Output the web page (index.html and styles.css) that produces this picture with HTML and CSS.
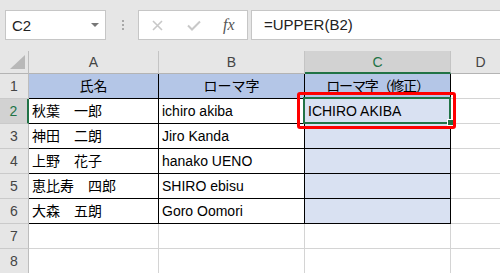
FILE: index.html
```html
<html>
<head>
	<title>UPPER</title>
	<meta http-equiv="content-type" content="text/html;charset=utf-8">
	<link rel="stylesheet" href="styles.css">
</head>
<body>
	<!-- 数式バー -->
	<div class="toolbar">
		<div class="namebox"><span class="ref">C2</span><span class="drop"></span></div>
		<div class="grip"><i></i><i></i><i></i></div>
		<div class="fxbox">
			<svg class="cancel" width="11" height="11" viewBox="0 0 11 11"><path d="M1 1L10 10M10 1L1 10" stroke="#c8c8c8" stroke-width="1.6" fill="none"/></svg>
			<svg class="enter" width="14" height="11" viewBox="0 0 14 11"><path d="M1 5.5L5 9.5L13 1.5" stroke="#c8c8c8" stroke-width="2" fill="none"/></svg>
			<span class="fx">fx</span>
		</div>
		<div class="formula">=UPPER(B2)</div>
	</div>
	<!-- シート -->
	<div class="sheet">
		<div class="corner"><span class="tri"></span></div>
		<div class="hd">A</div>
		<div class="hd">B</div>
		<div class="hd on col">C</div>
		<div class="hd">D</div>

		<div class="rh">1</div>
		<div class="c t ttl ctr">氏名</div>
		<div class="c t ttl ctr">ローマ字</div>
		<div class="c t ttl ctr narrow">ローマ字（修正）</div>
		<div class="c"></div>

		<div class="rh on row">2</div>
		<div class="c t">秋葉　一郎</div>
		<div class="c t">ichiro akiba</div>
		<div class="c t fill cur">ICHIRO AKIBA
			<span class="cursor"></span><span class="handle"></span><span class="mark"></span>
		</div>
		<div class="c"></div>

		<div class="rh">3</div>
		<div class="c t">神田　二朗</div>
		<div class="c t">Jiro Kanda</div>
		<div class="c t fill"></div>
		<div class="c"></div>

		<div class="rh">4</div>
		<div class="c t">上野　花子</div>
		<div class="c t">hanako UENO</div>
		<div class="c t fill"></div>
		<div class="c"></div>

		<div class="rh">5</div>
		<div class="c t">恵比寿　四郎</div>
		<div class="c t">SHIRO ebisu</div>
		<div class="c t fill"></div>
		<div class="c"></div>

		<div class="rh">6</div>
		<div class="c t">大森　五朗</div>
		<div class="c t">Goro Oomori</div>
		<div class="c t fill"></div>
		<div class="c"></div>

		<div class="rh">7</div>
		<div class="c"></div>
		<div class="c"></div>
		<div class="c"></div>
		<div class="c"></div>

		<div class="rh">8</div>
		<div class="c"></div>
		<div class="c"></div>
		<div class="c"></div>
		<div class="c"></div>
	</div>
</body>
</html>
```

FILE: styles.css
```css
body {
	margin: 0;
	overflow: hidden;
	background: #e6e6e6;
	font-family: "Liberation Sans", "Noto Sans CJK JP", sans-serif;
}
.toolbar {
	display: flex;
	align-items: flex-start;
	height: 51px;
	box-sizing: border-box;
	padding: 10px 0 0 5px;
	background: #e6e6e6;
}
.namebox {
	display: flex;
	align-items: center;
	justify-content: space-between;
	width: 101px;
	height: 30px;
	box-sizing: border-box;
	padding: 0 6px 0 6px;
	background: #fff;
	border: 1px solid #c6c6c6;
}
.ref {
	font-size: 15px;
	color: #222;
}
.drop {
	width: 0;
	height: 0;
	border-left: 4px solid transparent;
	border-right: 4px solid transparent;
	border-top: 4px solid #777;
}
.grip {
	display: flex;
	flex-direction: column;
	gap: 2px;
	margin: 10px 0 0 16px;
}
.grip i {
	width: 2px;
	height: 2px;
	background: #a8a8a8;
}
.fxbox {
	display: flex;
	align-items: center;
	width: 110px;
	height: 30px;
	box-sizing: border-box;
	margin-left: 14px;
	padding-left: 13px;
	background: #fff;
	border: 1px solid #c6c6c6;
}
.enter {
	margin-left: 24px;
}
.fx {
	margin-left: 22px;
	font-family: "Liberation Serif", serif;
	font-style: italic;
	font-size: 16px;
	color: #555;
}
.formula {
	flex: 1;
	height: 30px;
	box-sizing: border-box;
	margin: 0 -10px 0 3px;
	padding-left: 12px;
	line-height: 28px;
	font-size: 15px;
	color: #222;
	background: #fff;
	border: 1px solid #c6c6c6;
}
.sheet {
	display: grid;
	grid-template-columns: 29px 130px 146px 146px 60px;
	grid-template-rows: 23px repeat(8, 25px);
	background: #fff;
}
.sheet > div {
	box-sizing: border-box;
	border-right: 1px solid #d4d4d4;
	border-bottom: 1px solid #d4d4d4;
	white-space: nowrap;
	font-size: 14px;
	color: #000;
}
.corner {
	display: flex;
	align-items: flex-end;
	padding: 0 0 4px 10px;
	background: #e6e6e6;
}
.sheet > .corner {
	border-right-color: #bdbdbd;
	border-bottom-color: #b4b4b4;
}
.tri {
	width: 0;
	height: 0;
	border-left: 15px solid transparent;
	border-bottom: 14px solid #b8b8b8;
}
.sheet > .hd {
	background: #e6e6e6;
	border-right-color: #c4c4c4;
	border-bottom-color: #b4b4b4;
	text-align: center;
	line-height: 22px;
	color: #444;
}
.sheet > .rh {
	background: #e6e6e6;
	border-right-color: #bdbdbd;
	border-bottom-color: #cacaca;
	text-align: center;
	line-height: 24px;
	color: #444;
}
.sheet > .on {
	background: #d2d2d2;
	color: #217346;
}
.sheet > .col {
	border-bottom: 2px solid #217346;
}
.sheet > .row {
	border-right: 2px solid #217346;
}
.c {
	padding: 0 3px;
	line-height: 24px;
}
.sheet > .t {
	border-right-color: #000;
	border-bottom-color: #000;
}
.ttl {
	background: #b4c6e7;
}
.ctr {
	text-align: center;
}
.narrow {
	letter-spacing: -1.2px;
}
.fill {
	background: #d9e1f2;
}
.cur {
	position: relative;
}
.cursor {
	position: absolute;
	left: -2px;
	top: -2px;
	right: -1px;
	bottom: -1px;
	border: 2px solid #217346;
}
.handle {
	position: absolute;
	right: -3px;
	bottom: -2px;
	width: 5px;
	height: 5px;
	background: #217346;
	box-shadow: 0 0 0 1px #fff;
}
.mark {
	position: absolute;
	left: -8px;
	top: -7px;
	right: -6px;
	bottom: -6px;
	border: 3px solid #ff0000;
	border-radius: 3px;
}
```
